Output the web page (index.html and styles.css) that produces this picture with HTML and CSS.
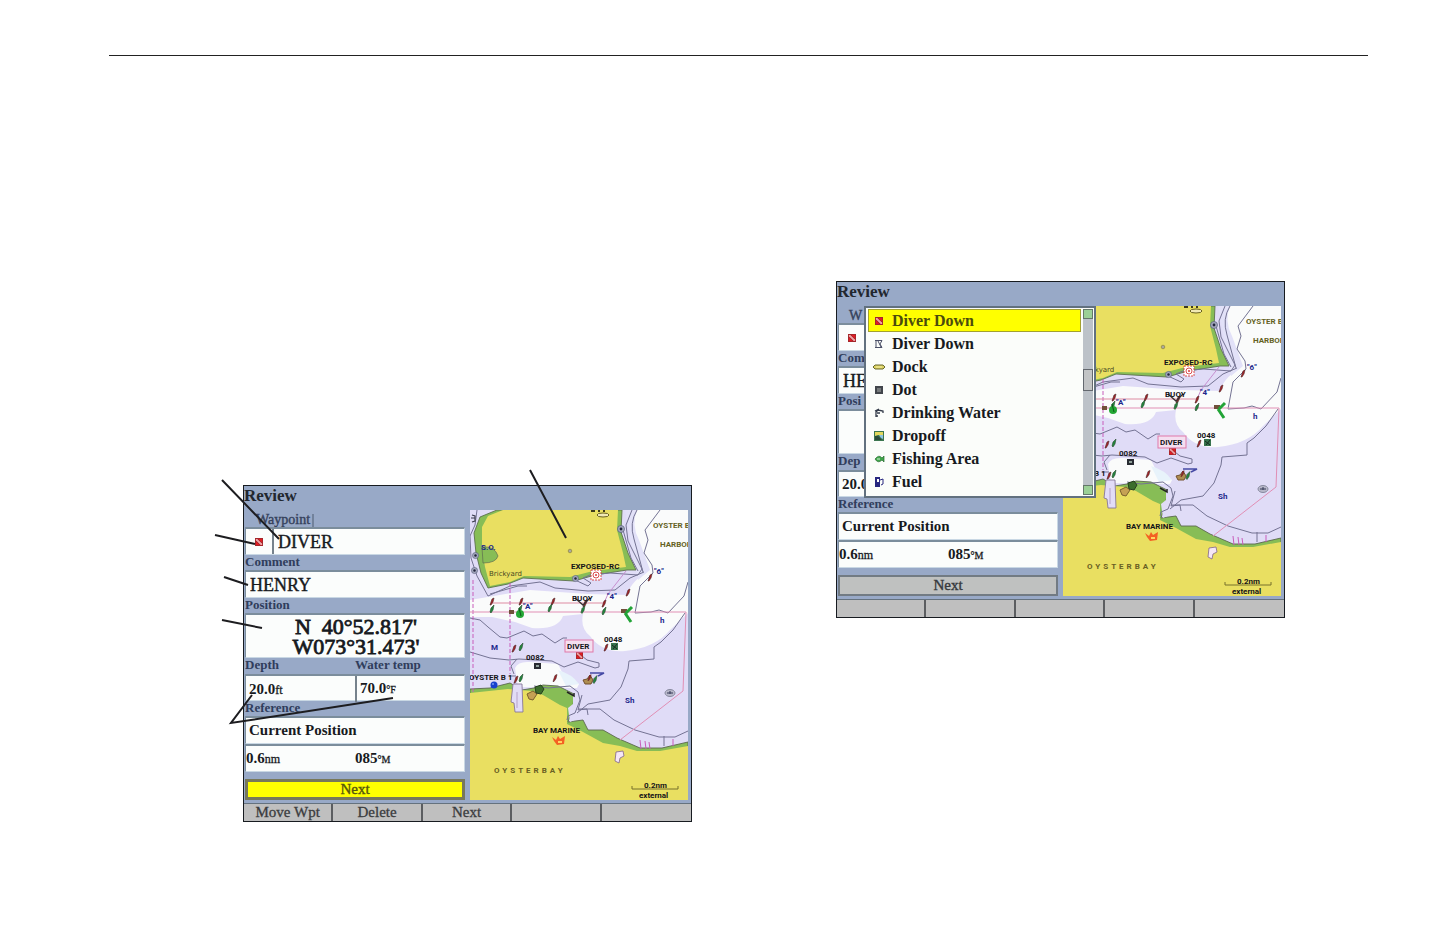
FILE: index.html
```
<!DOCTYPE html>
<html lang="en">
<head>
<meta charset="utf-8">
<title>Review Waypoint</title>
<link rel="stylesheet" href="styles.css">
</head>
<body>
<svg class="defs" width="0" height="0" aria-hidden="true">
  <defs>
    <symbol id="flag" viewBox="0 0 9 9"><path d="M0 0h9v9H0z" fill="#a0282c"/><path d="M1 1h7v7H1z" fill="#e21b22"/><path d="M1 1h2l5 5v2H6L1 3z" fill="#fff" opacity=".6"/><path d="M3 1l5 5M1 3l5 5" stroke="#6c1014" stroke-width=".7"/></symbol>
    <symbol id="red" viewBox="0 0 6 8" overflow="visible"><path d="M1 7L3 1 5 0 4 4 2 7z" fill="#a82228" stroke="#4a2525" stroke-width=".6"/></symbol>
    <symbol id="green" viewBox="0 0 6 8" overflow="visible"><path d="M1 7L2 3 5 0 4 5 2 8z" fill="#23883e" stroke="#29462e" stroke-width=".6"/></symbol>
    <symbol id="ring" viewBox="0 0 8 8" overflow="visible"><circle cx="4" cy="4" r="3.5" fill="#a4a8bd" stroke="#565b7a" stroke-width=".7"/><circle cx="4" cy="4" r="1.4" fill="#23263e"/></symbol>
    <symbol id="chart" viewBox="0 0 218 290">
      <path d="M0 0h218v290H0z" fill="#fafbfb"/>
      <path d="M0 0h163Q155 10 163 30L176 62Q158 75 158 85L118 84 60 80 0 90z" fill="#e0dcf7"/>
      <path d="M155 0h12q-6 15 2 30l11 30-12 10z" fill="#e2e1f8"/>
      <path d="M0 107L22 107 45 112 62 118Q88 120 93 106L113 104Q110 118 120 126 132 143 155 141 185 138 200 120L218 103V246H0z" fill="#e0dcf7"/>
      <path d="M45 158Q48 151 60 152L88 154 93 164 109 174 107 178 48 177z" fill="#fafbfb"/>
      <path d="M88 160q14 4 21 14l-13 2z" fill="#e8f3fb"/>
      <path d="M27 0L10 7 4 23 6 43 11 63 18 78 38 74 53 68 104 71 125 65 157 60 166 60 158 43 151 22 152 0z" fill="#87bd56" stroke="#5c704d" stroke-width=".9"/>
      <path d="M33 0L18 6 12 17 12 38 15 57 20 76 40 72 54 66 100 67 123 61 156 57 153 43 147 20 148 0z" fill="#e9df61"/>
      <path d="M12 37Q25 36 28 46 26 53 13 53z" fill="#87bd56" stroke="#5c6c50" stroke-width=".7"/>
      <path d="M0 179L20 178 40 173 52 180 64 178 73 175 88 176 104 184 103 197 98 212 113 210 118 220 133 220 147 228 170 238 192 238 218 232V290H0z" fill="#87bd56" stroke="#5b684f" stroke-width=".9"/>
      <path d="M0 183L38 179 62 181 73 185 90 195 97 198 97 214 113 222 133 233 150 236 167 241 190 241 218 236V290H0z" fill="#e9df61"/>
      <path d="M43 174h9l1 28h-8l-1-9-3-1z" fill="#e2dcf7" stroke="#877798" stroke-width=".9"/><path d="M47 182v16" stroke="#9c7cac" stroke-width=".6"/>
      <path d="M98 198l5-4V182l7 2-3 25-7 3z" fill="#e0dcf7"/>
      <path d="M146 242l7-1 1 5-4 2-1 5-4-2z" fill="#f5e7f6" stroke="#80658c" stroke-width=".8"/>
      <g fill="none" stroke="#747393" stroke-width="1">
        <path d="M7 0L5 15 0 26 1 48 7 66 18 86 40 76 70 72 85 78 118 81 145 80 160 68 174 62"/>
        <path d="M162 0L156 15 158 31 172 59 168 65 140 63 120 65 113 68 121 73 118 76 105 70M153 20l8 28 7 13"/>
        <path d="M167 0Q159 13 164 29L173 62M20 84L48 76 57 76"/>
        <path d="M190 0L175 20 178 30 174 43 182 55 183 63 170 76 165 103 181 102 189 100 198 103 214 86 218 72"/>
        <path d="M0 108L10 110 18 117 30 127 37 128 54 121 63 126 72 124 85 133 93 128 97 128"/>
        <path d="M215 103L203 120 191 132 184 137 184 149 159 151 158 159 151 177 140 190 118 194 107 203"/>
        <path d="M0 142L20 148 39 150 49 149 82 151 94 157 108 152 125 158 129 157 129 153 117 150 112 146"/>
        <path d="M44 164L41 156 47 149M39 166L46 166M64 176L78 178 100 176 108 182 110 190 105 203 98 206 97 210M112 185L108 200 117 199 118 205M108 199L130 199 144 210 165 220 189 227 205 227 218 221"/>
        <path d="M194 226v10"/>
      </g>
      <g fill="none" stroke="#c85dbb" stroke-width="1"><path d="M3 70V182M40 73V164" stroke-dasharray="4 2"/><path d="M134 93L138 84 156 61" stroke="#c78fd0"/><path d="M0 102H216L213 181 150 230" stroke="#e18fb5"/><path d="M170 230l1 9M175 231l1 8M179 232l1 7M203 229v7"/></g>
      <path d="M22 93H134" stroke="#de8ba2" fill="none"/>
      <use href="#ring" x="147" y="15" width="8" height="8"/><use href="#ring" x="2" y="42" width="7" height="7"/><use href="#ring" x="1" y="57" width="7" height="7"/><use href="#ring" x="102" y="65" width="7" height="7"/>
      <ellipse cx="200" cy="183" rx="5" ry="3.5" fill="#b8b8ca" stroke="#888aa0"/><path d="M197 183h6M200 181v3" stroke="#353856"/>
      <circle cx="100" cy="41" r="1.8" fill="#aaa99e" stroke="#8c833e" stroke-width=".7"/>
      <g fill="#fff" stroke="#d63b3b" stroke-width=".9"><path d="M121 60h10v10h-10z" stroke-dasharray="2 1"/><circle cx="126" cy="65" r="3"/></g><circle cx="126" cy="65" r="1" fill="#d63b3b"/>
      <path d="M121 0h4v2h-4zM128 0h2v2h-2zM133 0h2v2h-2z" fill="#3d3a1c"/>
      <path d="M127 5q0-2 6-2t6 2-6 2-6-2z" fill="#f1e9b4" stroke="#69611f"/>
      <path d="M2 5l3 1v5l-3 1M1 8h4" fill="none" stroke="#3b3b4d" stroke-width="1.2"/>
      <use href="#red" x="19" y="88" width="6" height="8"/><use href="#green" x="19" y="95" width="6" height="8"/>
      <use href="#red" x="48" y="88" width="6" height="8"/><use href="#green" x="47" y="95" width="6" height="8"/>
      <use href="#red" x="80" y="88" width="6" height="8"/><use href="#green" x="77" y="94" width="6" height="8"/>
      <use href="#red" x="112" y="90" width="6" height="8"/><use href="#green" x="110" y="95" width="6" height="9"/>
      <use href="#red" x="131" y="90" width="6" height="8"/><use href="#green" x="131" y="97" width="6" height="8"/>
      <use href="#red" x="155" y="79" width="6" height="8"/><use href="#red" x="177" y="64" width="6" height="8"/>
      <use href="#red" x="41" y="135" width="6" height="8"/><use href="#green" x="48" y="133" width="6" height="8"/>
      <use href="#red" x="43" y="166" width="6" height="8"/><use href="#green" x="48" y="162" width="6" height="12"/>
      <use href="#red" x="82" y="164" width="6" height="9"/><use href="#red" x="133" y="134" width="6" height="8"/>
      <path d="M105 88l8 7 7-7" fill="none" stroke="#373131" stroke-width="1.3"/>
      <path d="M39 100h5v4h-5zM151 99h6v4h-6z" fill="#70503a"/><circle cx="50" cy="104" r="4" fill="#24a735"/><path d="M49 98l2 8" stroke="#0c5a18"/><path d="M155 103l6 9M156 103l6-6" stroke="#22a437" stroke-width="3"/>
      <path d="M141 133h7v7h-7z" fill="#37734d"/><path d="M142 135l5 4M147 134l-4 5" stroke="#152d20"/>
      <path d="M64 153h7v6h-7z" fill="#282b32"/><path d="M66 155h3v2h-3z" fill="#90a09a"/>
      <use href="#flag" x="106" y="142" width="7" height="7"/>
      <circle cx="24" cy="175" r="3.5" fill="#1741cf"/><circle cx="23" cy="174" r="1" fill="#779bed"/>
      <path d="M57 184l6-3 4 3-4 6-4-1z" fill="#c5a154" stroke="#7b612e"/><path d="M65 177l6-2 3 4-3 5-5-1z" fill="#3b6d2c" stroke="#263e1f"/>
      <path d="M113 170l4-1 3-4 3 5-2 4h-6z" fill="#ae8d51" stroke="#72502f"/><use href="#green" x="122" y="165" width="6" height="9"/><use href="#red" x="117" y="164" width="5" height="8"/>
      <path d="M97 182l7 4v-3" fill="none" stroke="#222" stroke-width="1.5"/><path d="M120 163h14l-6 3" fill="none" stroke="#4549a5" stroke-width="1.4"/>
      <path d="M82 227l4 3 2-4 2 3 5-3-1 8-7 1-3-4z" fill="#f46123"/><path d="M88 231h4v2h-4z" fill="#ffd55e"/>
      <path d="M162 276v3h46v-3" fill="none" stroke="#77702c" stroke-width="1"/>
    </symbol>
  </defs>
</svg>

<header class="page-head"><hr class="rule"></header>

<main class="spread">
  <figure class="figure figure-left">
    <section class="device" aria-label="Review waypoint">
      <h2 class="title">Review</h2>
      <div class="content">
        <form class="form">
          <div class="tabs"><span class="tab">Waypoint</span></div>
          <div class="field"><button class="symbol" type="button" aria-label="Waypoint symbol"><svg class="flag"><use href="#flag"/></svg></button><input class="text" aria-label="Name" value="DIVER"></div>
          <label class="label" for="comment">Comment</label>
          <div class="field"><input class="text" id="comment" value="HENRY"></div>
          <label class="label" for="position">Position</label>
          <div class="field tall"><textarea class="position" id="position" rows="2">N  40°52.817'
W073°31.473'</textarea></div>
          <div class="label pair"><span>Depth</span><span>Water temp</span></div>
          <div class="field pair short"><output class="value">20.0<small>ft</small></output><output class="value divided">70.0<small class="degree">°F</small></output></div>
          <div class="label">Reference</div>
          <div class="field"><output class="value">Current Position</output></div>
          <div class="field pair"><output>0.6<small>nm</small></output><output>085<small class="degree">°M</small></output></div>
          <button class="next active" type="button">Next</button>
        </form>
        <svg class="map" viewBox="0 0 218 290" role="img" aria-label="Oyster Bay chart">
          <use href="#chart" width="218" height="290"/>
          <g class="place olive"><text x="183" y="18">OYSTER B</text><text x="190" y="37">HARBOR</text></g>
          <g class="place"><text x="101" y="59">EXPOSED-RC</text><text x="102" y="91">BUOY</text><text x="134" y="132">0048</text><text x="56" y="150">0082</text><text x="-1" y="170">OYSTER B 1</text><text x="63" y="223">BAY MARINE</text><text x="174" y="278">0.2nm</text><text x="169" y="288">external</text></g>
          <g class="place navy"><text x="11" y="40">S.O.</text><text x="53" y="99">"A"</text><text x="137" y="89">"4"</text><text x="184" y="64">"6"</text><text x="190" y="113">h</text><text x="21" y="140">M</text><text x="155" y="193">Sh</text></g>
          <text class="small-place" x="19" y="66">Brickyard</text>
          <g class="place"><rect class="tag" x="95" y="130" width="28" height="12"/><text x="97" y="139">DIVER</text></g>
          <text class="place town" x="24" y="263">OYSTERBAY</text>
        </svg>
      </div>
      <nav class="softkeys"><button type="button">Move Wpt</button><button type="button">Delete</button><button type="button">Next</button><button type="button" aria-label="Empty"></button><button type="button" aria-label="Empty"></button></nav>
    </section>
    <svg class="callouts" viewBox="0 0 449 337" aria-hidden="true"><path d="M-21-5L36 54M-28 50L12 59M-19 92L5 100M-21 135L19 143M9 210L-12 238 150 213M287-15L323 53"/></svg>
  </figure>

  <figure class="figure figure-right">
    <section class="device" aria-label="Choose symbol">
      <h2 class="title">Review</h2>
      <div class="content">
        <form class="form">
          <div class="tabs"><span class="tab">W</span></div>
          <div class="field"><button class="symbol" type="button" aria-label="Waypoint symbol"><svg class="flag"><use href="#flag"/></svg></button></div>
          <label class="label" for="comment2">Com</label>
          <div class="field"><input class="text" id="comment2" value="HE"></div>
          <div class="label">Posi</div>
          <div class="field tall"></div>
          <div class="label pair"><span>Dep</span></div>
          <div class="field short"><output class="value">20.0</output></div>
          <div class="label">Reference</div>
          <div class="field"><output class="value">Current Position</output></div>
          <div class="field pair"><output>0.6<small>nm</small></output><output>085<small class="degree">°M</small></output></div>
          <button class="next" type="button">Next</button>
        </form>
        <svg class="map" viewBox="0 0 218 290" role="img" aria-label="Oyster Bay chart">
          <use href="#chart" width="218" height="290"/>
          <g class="place olive"><text x="183" y="18">OYSTER B</text><text x="190" y="37">HARBOR</text></g>
          <g class="place"><text x="101" y="59">EXPOSED-RC</text><text x="102" y="91">BUOY</text><text x="134" y="132">0048</text><text x="56" y="150">0082</text><text x="31" y="170">B 1</text><text x="63" y="223">BAY MARINE</text><text x="174" y="278">0.2nm</text><text x="169" y="288">external</text></g>
          <g class="place navy"><text x="53" y="99">"A"</text><text x="137" y="89">"4"</text><text x="184" y="64">"6"</text><text x="190" y="113">h</text><text x="155" y="193">Sh</text></g>
          <text class="small-place" x="28" y="66">ckyard</text>
          <g class="place"><rect class="tag" x="95" y="130" width="28" height="12"/><text x="97" y="139">DIVER</text></g>
          <text class="place town" x="24" y="263">OYSTERBAY</text>
        </svg>
      </div>
      <nav class="softkeys"><button type="button" aria-label="Empty"></button><button type="button" aria-label="Empty"></button><button type="button" aria-label="Empty"></button><button type="button" aria-label="Empty"></button><button type="button" aria-label="Empty"></button></nav>
      <div class="popup">
        <ul class="options">
          <li><button class="option selected" type="button"><svg viewBox="0 0 14 12"><use href="#flag" x="3" y="2" width="8" height="8"/></svg>Diver Down</button></li>
          <li><button class="option" type="button"><svg viewBox="0 0 14 12"><path d="M4 2v8M3 2.500h7L8 6l2 3.500H3M6 3l3 6" fill="none" stroke="#4b5067"/></svg>Diver Down</button></li>
          <li><button class="option" type="button"><svg viewBox="0 0 14 12"><path d="M1 6l2-2h8l2 2-2 2H3z" fill="#dbd15f" stroke="#69692f"/><path d="M4 6h6" stroke="#f7f1a8"/></svg>Dock</button></li>
          <li><button class="option" type="button"><svg viewBox="0 0 14 12"><path d="M3 2h8v8H3z" fill="#41454b"/><path d="M5 4h4v4H5z" fill="#767a7c"/></svg>Dot</button></li>
          <li><button class="option" type="button"><svg viewBox="0 0 14 12"><path d="M4 10V5l2-2 5 1v2M3 4l4-2M5 6h3M4 9h2" fill="none" stroke="#333b49" stroke-width="1.300"/></svg>Drinking Water</button></li>
          <li><button class="option" type="button"><svg viewBox="0 0 14 12"><path d="M2 1h10v10H2z" fill="#3c7650"/><path d="M3 2h8v3H6L3 6z" fill="#e4d95e"/><path d="M7 5h4v4L9 8z" fill="#8cc4e3"/><path d="M3 6l3 0 4 4H3z" fill="#294b3a"/></svg>Dropoff</button></li>
          <li><button class="option" type="button"><svg viewBox="0 0 14 12"><path d="M3 6q4-5 7-1l2-2v6l-2-2q-4 4-7-1z" fill="#3fa64a" stroke="#286b32" stroke-width=".7"/><path d="M5 6h3" stroke="#d7f0d7"/></svg>Fishing Area</button></li>
          <li><button class="option" type="button"><svg viewBox="0 0 14 12"><path d="M3 1h5v10H3z" fill="#27277f"/><path d="M8 4l3-1v5l-2 1" fill="none" stroke="#27277f"/><path d="M5 3h2v3H5z" fill="#fff"/></svg>Fuel</button></li>
        </ul>
        <div class="scrollbar"><span class="arrow"></span><span class="thumb"></span><span class="arrow"></span></div>
      </div>
    </section>
  </figure>
</main>
</body>
</html>
```
FILE: styles.css
```
* { box-sizing: border-box; }
body { margin: 0; background: #fff; color: #171a1e; font-family: "Liberation Serif", serif; }
button, input, textarea { font: inherit; color: inherit; border: 0; margin: 0; padding: 0; background: none; }
.defs { display: block; height: 0; }
.page-head { padding: 55px 5% 0 7.55%; }
.rule { margin: 0; border: 0; height: 1px; background: #222; }
.spread { display: grid; grid-template-columns: 243fr 449fr 144fr 449fr 155fr; align-items: start; padding-bottom: 40px; }
.figure { position: relative; margin: 0; }
.figure-left { grid-column: 2; margin-top: 429px; }
.figure-right { grid-column: 4; margin-top: 225px; }
.device { position: relative; border: 1px solid #171b20; background: #98a9c7; }
.title { margin: 0; height: 24px; font-size: 17px; line-height: 20px; font-weight: bold; color: #22272f; }
.content { display: grid; grid-template-columns: 220fr 218fr; column-gap: 5px; padding: 0 3px 3px 1px; }
.form { display: flex; flex-direction: column; min-width: 0; }
.tabs { height: 17px; }
.tab { display: inline-block; height: 17px; padding: 0 2px 0 11px; border-right: 2px solid #72829b; font-size: 14px; line-height: 12px; -webkit-text-stroke: 0.4px #35415c; color: #35415c; }
.field { display: flex; align-items: center; height: 28px; background: #fbfdfc; border: 1px solid #7b8d9c; border-top-width: 2px; border-right-color: #c9d8e4; border-bottom-color: #c9d8e4; font-size: 15px; font-weight: bold; }
.label { height: 15px; font-size: 13px; line-height: 13px; font-weight: bold; color: #303d5c; }
.text { width: 100%; min-width: 0; padding-left: 4px; font-size: 18px; line-height: 24px; font-weight: normal; -webkit-text-stroke: 0.4px #171a1e; }
.symbol { flex: none; width: 28px; height: 100%; border-right: 2px solid #76828c; display: grid; place-items: center; }
.flag { width: 8px; height: 8px; }
.tall { height: 45px; }
.position { display: block; width: 100%; height: 42px; padding: 2px 6px 0 8px; resize: none; overflow: hidden; text-align: center; white-space: pre; font-size: 22px; line-height: 20px; font-weight: normal; -webkit-text-stroke: 0.8px #171a1e; }
.pair { display: grid; grid-template-columns: 1fr 1fr; }
.label.pair { height: 16px; }
.short { height: 27px; }
.value { padding-left: 3px; }
.divided { border-left: 2px solid #76828c; line-height: 24px; }
small { font-size: 12px; font-weight: normal; -webkit-text-stroke: 0.3px #171a1e; }
.degree { font-size: 10px; }
.next { height: 21px; margin-top: 7px; border: 2px solid #727b83; background: #bfc1c0; font-size: 15px; line-height: 15px; color: #36393d; -webkit-text-stroke: 0.4px #36393d; }
.next.active { background: #ff0; border: 3px solid #77785a; color: #55560c; -webkit-text-stroke: 0.4px #55560c; }
.map { display: block; width: 100%; height: 290px; overflow: hidden; }
.place { font: bold 8px Roboto, sans-serif; fill: #151518; }
.olive { fill: #65621f; }
.navy { fill: #22278b; }
.small-place { font: 7px "DejaVu Sans", sans-serif; fill: #484921; }
.tag { fill: #f4dff0; stroke: #df79a9; }
.town { letter-spacing: 3px; fill: #696024; }
.softkeys { display: grid; grid-template-columns: repeat(5, 1fr); height: 18px; border-top: 1px solid #65727e; background: #bfbfbf; }
.softkeys button { border-right: 2px solid #5b5d60; font-size: 15px; line-height: 15px; color: #3b3c3e; -webkit-text-stroke: 0.3px #3b3c3e; }
.softkeys button:last-child { border-right: 0; }
.callouts { position: absolute; inset: 0; width: 100%; height: 100%; overflow: visible; fill: none; stroke: #1d1d20; stroke-width: 2; }
.popup { position: absolute; top: 24px; left: 27px; width: 232px; height: 192px; padding: 1px 1px 1px 2px; display: grid; grid-template-columns: 1fr 10px; column-gap: 2px; border: 2px solid #62717f; background: #fbfdfa; }
.options { list-style: none; margin: 0; padding: 0; }
.option { display: flex; align-items: center; width: 100%; height: 23px; padding-left: 3px; gap: 6px; font-size: 16px; font-weight: bold; text-align: left; border: 1px solid transparent; }
.option svg { width: 14px; height: 12px; }
.selected { background: #ff0; border-color: #a3a12e; color: #4b4b0d; }
.scrollbar { display: flex; flex-direction: column; justify-content: space-between; background: #bcc2c8; }
.arrow { height: 10px; border: 1px solid #65786a; background: #9bd096; }
.thumb { height: 22px; margin-bottom: 44px; border: 1px solid #64696f; background: #c2c4c5; }
```
